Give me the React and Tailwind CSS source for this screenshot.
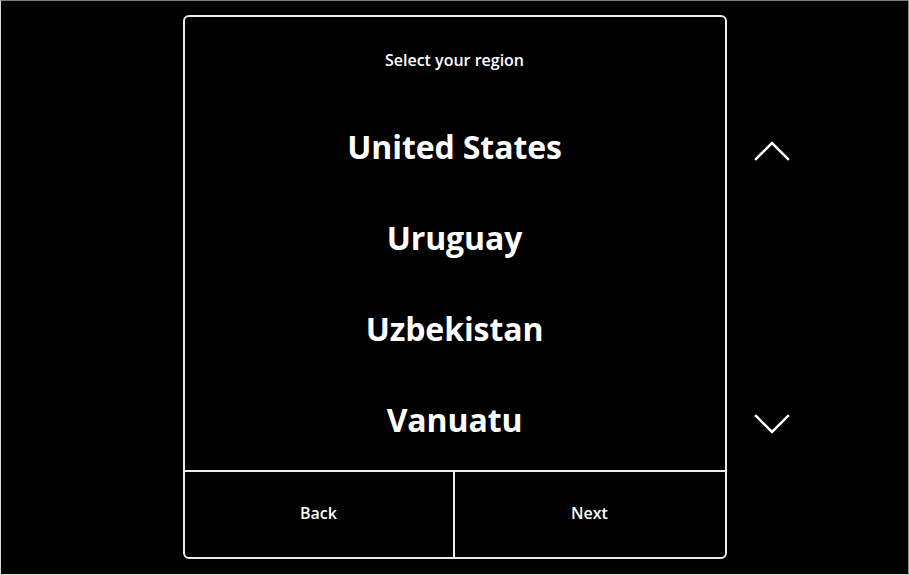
const regions = ['United States', 'Uruguay', 'Uzbekistan', 'Vanuatu'];

const Chevron = ({ up }) => (
  <svg width="36" height="21" viewBox="0 0 36 21" fill="none" stroke="currentColor" strokeWidth="2.5" strokeLinecap="square">
    <polyline points={up ? '2,19 18,3 34,19' : '2,2 18,18 34,2'} />
  </svg>
);

const App = () => {
  return (
    <div
      className="h-[575px] w-[909px] bg-black border border-t-[#7a7a7a] border-r-[#8a8a8a] border-b-[#d6d6d6] border-l-[#d6d6d6] overflow-hidden"
      style={{ fontFamily: '"Open Sans", "Noto Sans", sans-serif' }}
    >
      <div className="grid grid-cols-[1fr_544px_1fr] pt-[14px]">
        <div />

        <div className="h-[544px] flex flex-col border-2 border-[#ececec] rounded-[6px] text-white">
          <div className="h-[86px] flex items-center justify-center">
            <h1 className="text-[16px] font-semibold">Select your region</h1>
          </div>

          <ul className="flex-1 flex flex-col">
            {regions.map(region => (
              <li key={region} className="h-[91px] pb-[4px] flex items-center justify-center">
                <span className="text-[32px] font-bold tracking-[-0.1px]">{region}</span>
              </li>
            ))}
          </ul>

          <div className="h-[87px] grid grid-cols-2 border-t-2 border-[#ececec]">
            <button className="pb-[4px] flex items-center justify-center text-[16px] font-semibold text-white border-r-2 border-[#ececec]">
              Back
            </button>
            <button className="pb-[4px] flex items-center justify-center text-[16px] font-semibold text-white">
              Next
            </button>
          </div>
        </div>

        <div className="flex flex-col items-start pl-[27px] pt-[125px] text-white">
          <button>
            <Chevron up />
          </button>
          <button className="mt-[253px]">
            <Chevron />
          </button>
        </div>
      </div>
    </div>
  );
};

export default App;
